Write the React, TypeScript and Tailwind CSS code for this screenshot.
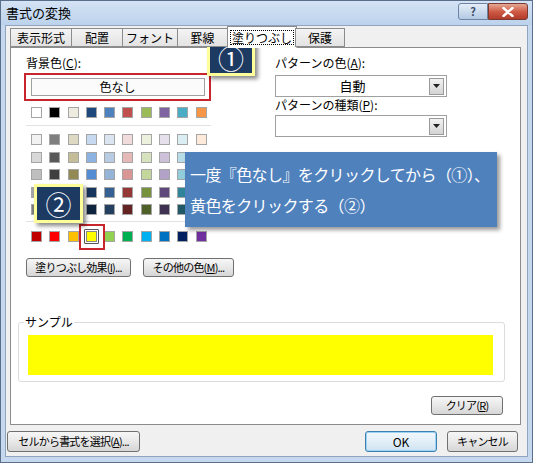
import React from 'react';

const themeTop = ['#ffffff', '#000000', '#eeece1', '#1f497d', '#4f81bd', '#c0504d', '#9bbb59', '#8064a2', '#4bacc6', '#f79646'];

const themeRows = [
  ['#f2f2f2', '#7f7f7f', '#ddd9c3', '#c6d9f0', '#dbe5f1', '#f2dcdb', '#ebf1dd', '#e5e0ec', '#dbeef3', '#fdeada'],
  ['#d8d8d8', '#595959', '#c4bd97', '#8db3e2', '#b8cce4', '#e5b9b7', '#d7e3bc', '#ccc1d9', '#b7dde8', '#fbd5b5'],
  ['#bfbfbf', '#3f3f3f', '#938953', '#548dd4', '#95b3d7', '#d99694', '#c3d69b', '#b2a2c7', '#92cddc', '#fac08f'],
  ['#a5a5a5', '#262626', '#494429', '#17365d', '#366092', '#953734', '#76923c', '#5f497a', '#31859b', '#e36c09'],
  ['#7f7f7f', '#0c0c0c', '#1d1b10', '#0f243e', '#244061', '#632423', '#4f6128', '#3f3151', '#205867', '#974806'],
];

const standard = ['#c00000', '#ff0000', '#ffc000', '#ffff00', '#92d050', '#00b050', '#00b0f0', '#0070c0', '#002060', '#7030a0'];

const tabs = ['表示形式', '配置', 'フォント', '罫線', '塗りつぶし', '保護'];
const tabWidths = ['w-[62px]', 'w-[52px]', 'w-[56px]', 'w-[51px]', 'w-[70px]', 'w-[50px]'];

const font = { fontFamily: '"Noto Sans CJK JP", "Noto Sans", sans-serif' };

const Swatch: React.FC<{ color: string; selected?: boolean }> = ({ color, selected }) => {
  if (selected) {
    return (
      <div className="relative w-[11px] h-[11px]">
        <div className="absolute -left-[7px] -top-[7px] w-[26px] h-[26px] border-2 border-[#c8262c]" />
        <div className="absolute -left-[2px] -top-[2px] w-[15px] h-[15px] border border-[#555] rounded-[1px] bg-white p-[1px]">
          <div className="w-full h-full border border-[#888]" style={{ backgroundColor: color }} />
        </div>
      </div>
    );
  }
  return <div className="w-[11px] h-[11px] border border-[#a5a5a5]" style={{ backgroundColor: color }} />;
};

const Row: React.FC<{ colors: string[]; selectedIndex?: number }> = ({ colors, selectedIndex }) => (
  <div className="grid grid-cols-[repeat(10,11px)] gap-x-[7.3px]">
    {colors.map((c, i) => (
      <Swatch key={i} color={c} selected={i === selectedIndex} />
    ))}
  </div>
);

const Btn: React.FC<{ children: React.ReactNode; className?: string }> = ({ children, className }) => (
  <div
    className={`flex items-center justify-center border border-[#707070] rounded-[3px] bg-gradient-to-b from-[#f6f6f6] via-[#e8e8e8] to-[#d6d6d6] text-[11px] tracking-[-0.8px] text-black ${className ?? ''}`}
  >
    <span className="whitespace-nowrap">{children}</span>
  </div>
);

const Combo: React.FC<{ value?: string }> = ({ value }) => (
  <div className="flex items-center w-[172px] h-[22px] border border-[#a0a0a0] bg-white pr-[2px]">
    <div className="flex-1 text-center text-[13px] text-black">{value}</div>
    <div className="flex items-center justify-center w-[15px] h-[17px] border border-[#9a9a9a] bg-gradient-to-b from-[#f2f2f2] to-[#d4d4d4]">
      <svg width="7" height="4" viewBox="0 0 7 4">
        <path d="M0 0h7L3.5 4z" fill="#222" />
      </svg>
    </div>
  </div>
);

const Marker: React.FC<{ label: string; className: string }> = ({ label, className }) => (
  <div
    className={`absolute flex items-center justify-center bg-[#1d3a63] border-[3px] border-[#ffff99] text-white text-[26px] leading-none shadow-[3px_3px_4px_rgba(0,0,0,0.45)] ${className}`}
  >
    {label}
  </div>
);

export default function App() {
  return (
    <div className="w-[533px] h-[463px] bg-[#c5d8ee] border border-[#5a6f8c] flex flex-col relative" style={font}>
      {/* title bar */}
      <div className="h-[24px] flex items-center justify-between bg-gradient-to-b from-[#d4e3f4] to-[#bcd2ec] pl-[5px] pr-[4px]">
        <span className="text-[13px] text-black">書式の変換</span>
        <div className="flex items-start h-full pt-[2px]">
          <div className="w-[30px] h-[17px] flex items-center justify-center border border-[#6d84a5] rounded-l-[3px] bg-gradient-to-b from-[#e4edf8] to-[#b4c9e3] text-[11px] font-bold text-[#3b4e6a]">
            ?
          </div>
          <div className="w-[40px] h-[17px] flex items-center justify-center border border-[#7a3a30] rounded-r-[3px] bg-gradient-to-b from-[#e3a796] via-[#cf5c47] to-[#b23a2a]">
            <svg width="12" height="10" viewBox="0 0 12 10">
              <path d="M1.5 1l9 8M10.5 1l-9 8" stroke="#fff" strokeWidth="2.4" strokeLinecap="round" />
            </svg>
          </div>
        </div>
      </div>

      {/* body */}
      <div className="flex-1 mx-[4px] mb-[5px] bg-[#f0f0f0] border border-[#90a4c0] flex flex-col pl-[4px] pr-[6px] pt-[1px]">
        {/* tabs */}
        <div className="flex items-end h-[20px] relative z-10">
          {tabs.map((t, i) => {
            const active = i === 4;
            return (
              <div
                key={t}
                className={`${tabWidths[i]} flex items-center justify-center border border-[#8c8c8c] ${
                  active
                    ? 'h-[22px] bg-white border-b-white -mb-[1px] -mx-[1px]'
                    : 'h-[19px] bg-gradient-to-b from-[#f4f4f4] to-[#e3e3e3] -ml-[1px] first:ml-0'
                } text-[12px] text-black`}
              >
                <span className={active ? 'border border-dotted border-black px-[1px] leading-[13px]' : ''}>{t}</span>
              </div>
            );
          })}
        </div>

        {/* panel */}
        <div className="h-[378px] bg-white border border-[#8c8c8c] flex flex-col pl-[7px] pr-[8px]">
          <div className="flex pl-[8px] pt-[8px]">
            {/* left */}
            <div className="flex flex-col w-[208px]">
              <div className="text-[12px] leading-[14px] text-black">
                背景色(<span className="underline">C</span>):
              </div>
              <div className="mt-[3px] w-[187px] h-[28px] -ml-[2px] border-2 border-[#c8262c] flex items-center justify-center">
                <div className="w-[174px] h-[18px] border border-[#a0a0a0] bg-[#fbfbfb] flex items-center justify-center text-[12px] text-black">
                  色なし
                </div>
              </div>
              <div className="mt-[6px] pl-[5px]">
                <Row colors={themeTop} />
              </div>
              <div className="mt-[7px] h-px w-[185px] bg-[#e2e2e2]" />
              <div className="mt-[8px] pl-[5px] flex flex-col gap-y-[6.5px]">
                {themeRows.map((r, i) => (
                  <Row key={i} colors={r} />
                ))}
              </div>
              <div className="mt-[6px] h-px w-[185px] bg-[#e2e2e2]" />
              <div className="mt-[9px] pl-[5px]">
                <Row colors={standard} selectedIndex={3} />
              </div>
              <div className="mt-[16px] flex gap-[12px]">
                <Btn className="w-[105px] h-[19px]">
                  塗りつぶし効果(<span className="underline">I</span>)...
                </Btn>
                <Btn className="w-[91px] h-[19px]">
                  その他の色(<span className="underline">M</span>)...
                </Btn>
              </div>
            </div>

            {/* right */}
            <div className="flex flex-col ml-[41px]">
              <div className="text-[12px] leading-[14px] text-black">
                パターンの色(<span className="underline">A</span>):
              </div>
              <div className="mt-[5px]">
                <Combo value="自動" />
              </div>
              <div className="mt-[1px] text-[12px] leading-[14px] text-black">
                パターンの種類(<span className="underline">P</span>):
              </div>
              <div className="mt-[3px]">
                <Combo />
              </div>
            </div>
          </div>

          {/* sample */}
          <div className="mt-[45px] mr-[7px] relative border border-[#dcdcdc] rounded-[3px] h-[60px] flex flex-col pl-[9px] pr-[11px] pt-[12px]">
            <span className="absolute -top-[9px] left-[5px] bg-white px-[1px] text-[12px] leading-[16px] text-black">
              サンプル
            </span>
            <div className="w-full h-[40px] bg-[#ffff00]" />
          </div>

          <div className="mt-[14px] flex justify-end pr-[9px]">
            <Btn className="w-[72px] h-[19px]">
              クリア(<span className="underline">R</span>)
            </Btn>
          </div>
        </div>

        {/* bottom buttons */}
        <div className="mt-[6px] flex items-center">
          <Btn className="w-[133px] h-[21px] -ml-[3px]">
            セルから書式を選択(<span className="underline">A</span>)...
          </Btn>
          <div className="flex-1" />
          <div className="w-[72px] h-[21px] flex items-center justify-center border border-[#3c7fb1] rounded-[3px] bg-gradient-to-b from-[#f2f8fc] via-[#e3eff8] to-[#cfe3f2] text-[12px] text-black shadow-[inset_0_0_0_1px_#9ed3f3]">
            OK
          </div>
          <Btn className="w-[71px] h-[21px] ml-[10px] mr-[3px]">キャンセル</Btn>
        </div>
      </div>

      {/* callouts */}
      <Marker label="①" className="left-[206px] top-[38px] w-[48px] h-[37px]" />
      <Marker label="②" className="left-[33px] top-[183px] w-[49px] h-[39px]" />
      <div className="absolute left-[184px] top-[151px] w-[312px] h-[75px] bg-[#4f81bd] shadow-[3px_3px_4px_rgba(0,0,0,0.4)] flex flex-col justify-center pl-[5px] text-white text-[16px] tracking-[-0.6px] leading-[31px] whitespace-nowrap">
        <div>一度『色なし』をクリックしてから（①）、</div>
        <div>黄色をクリックする（②）</div>
      </div>
    </div>
  );
}
